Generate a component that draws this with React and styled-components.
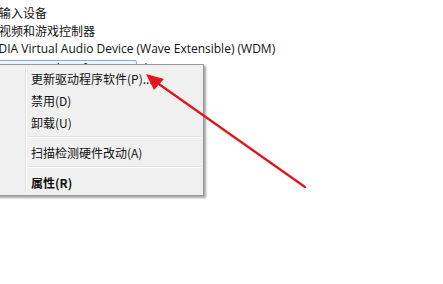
import styled, { createGlobalStyle } from "styled-components";

const GlobalStyle = createGlobalStyle`
  html, body {
    margin: 0;
    padding: 0;
    background: #ffffff;
    overflow: hidden;
  }
  body {
    font-family: "Noto Sans CJK SC", "Noto Sans", sans-serif;
  }
`;

const Page = styled.div`
  position: relative;
  width: 443px;
  height: 284px;
  overflow: hidden;
  background: #ffffff;
`;

const Tree = styled.div`
  padding-top: 3px;
  display: flex;
  flex-direction: column;
`;

const Row = styled.div`
  height: 18px;
  display: flex;
  align-items: center;
  margin-left: ${(p) => p.indent}px;
  font-size: 12px;
  color: #111;
  white-space: nowrap;
  font-family: ${(p) =>
    p.latin ? '"Open Sans", "Noto Sans", sans-serif' : '"Noto Sans CJK SC", sans-serif'};
`;

const Selected = styled.span`
  display: inline-block;
  height: 16px;
  line-height: 16px;
  padding: 0 4px 0 40px;
  margin-top: 6px;
  border: 1px solid #84acdd;
  border-radius: 2px;
  background: linear-gradient(#f2f7fe, #dbe8f9);
  width: 136px;
`;

const Menu = styled.div`
  position: absolute;
  left: -4px;
  top: 64px;
  width: 206px;
  padding: 2px 0;
  background: #f0f0f0;
  border: 1px solid #979797;
  box-shadow: 2px 2px 2px rgba(0, 0, 0, 0.35);
  font-family: "Noto Sans CJK SC", sans-serif;
  font-size: 12px;
  color: #111;
  display: flex;
  flex-direction: column;
  &::before {
    content: "";
    position: absolute;
    left: 28px;
    top: 2px;
    bottom: 2px;
    width: 1px;
    background: #e2e3e3;
    border-right: 1px solid #ffffff;
  }
`;

const Item = styled.div`
  height: 22px;
  display: flex;
  align-items: center;
  padding-left: 34px;
  font-weight: ${(p) => (p.bold ? 700 : 400)};
  white-space: nowrap;
`;

const Separator = styled.div`
  height: 8px;
  display: flex;
  align-items: center;
  padding-left: 31px;
  padding-right: 2px;
  &::after {
    content: "";
    flex: 1;
    height: 1px;
    background: #e0e0e0;
    border-bottom: 1px solid #ffffff;
  }
`;

const Overlay = styled.svg`
  position: absolute;
  left: 0;
  top: 0;
  pointer-events: none;
`;

export default function App() {
  return (
    <Page>
      <GlobalStyle />
      <Tree>
        <Row indent={-37}>人体学输入设备</Row>
        <Row indent={-37}>声音、视频和游戏控制器</Row>
        <Row indent={-21} latin>
          NVIDIA Virtual Audio Device (Wave Extensible) (WDM)
        </Row>
        <Row indent={-45} latin>
          <Selected>NVIDIA High Definition Audio</Selected>
        </Row>
      </Tree>
      <Menu>
        <Item>更新驱动程序软件(P)...</Item>
        <Item>禁用(D)</Item>
        <Item>卸载(U)</Item>
        <Separator />
        <Item>扫描检测硬件改动(A)</Item>
        <Separator />
        <Item bold>属性(R)</Item>
      </Menu>
      <Overlay width="443" height="284" viewBox="0 0 443 284">
        <line x1="305" y1="187" x2="156" y2="82" stroke="#e3141b" strokeWidth="2.2" strokeLinecap="round" />
        <polygon points="146,74 164,79 154,90" fill="#e3141b" />
      </Overlay>
    </Page>
  );
}
